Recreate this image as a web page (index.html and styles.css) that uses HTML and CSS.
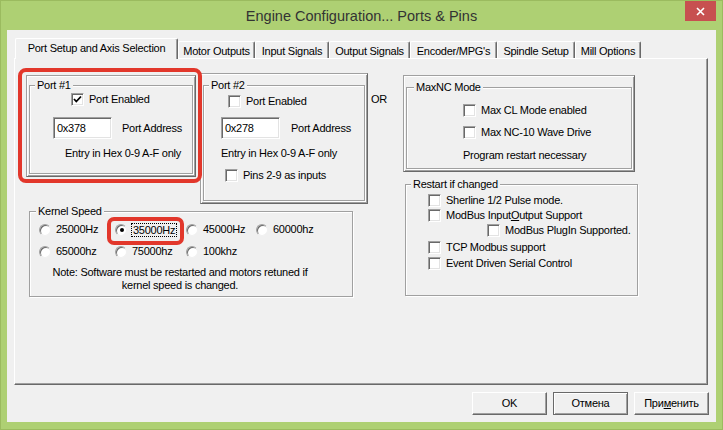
FILE: index.html
```html
<!DOCTYPE html>
<html>
<head>
<meta charset="utf-8">
<title>Engine Configuration... Ports &amp; Pins</title>
<link rel="stylesheet" href="styles.css">
</head>
<body>
<div class="window">
  <div class="titlebar">
    <div class="title">Engine Configuration... Ports &amp; Pins</div>
    <div class="close"><svg width="9" height="9" viewBox="0 0 9 9"><path d="M1 1L8 8M8 1L1 8" stroke="#fff" stroke-width="1.6"/></svg></div>
  </div>
  <div class="client">
    <div class="tabs">
      <div class="tab active">Port Setup and Axis Selection</div>
      <div class="tab t2">Motor Outputs</div>
      <div class="tab t3">Input Signals</div>
      <div class="tab t4">Output Signals</div>
      <div class="tab t5">Encoder/MPG's</div>
      <div class="tab t6">Spindle Setup</div>
      <div class="tab t7">Mill Options</div>
    </div>
    <div class="panel">
      <div class="left">
        <div class="toprow">
          <div class="frame f1">
            <div class="group">
              <div class="legend">Port #1</div>
              <div class="row p1cb"><span class="cb"><svg width="11" height="11" viewBox="0 0 11 11"><path d="M2 5L4.3 7.5L9 2.5" fill="none" stroke="#000" stroke-width="1.8"/></svg></span>Port Enabled</div>
              <div class="inrow p1in"><span class="inp">0x378</span><span>Port Address</span></div>
              <div class="txt p1hex">Entry in Hex 0-9 A-F only</div>
            </div>
          </div>
          <div class="frame f2">
            <div class="group">
              <div class="legend">Port #2</div>
              <div class="row p2cb"><span class="cb"></span>Port Enabled</div>
              <div class="inrow p2in"><span class="inp">0x278</span><span>Port Address</span></div>
              <div class="txt p2hex">Entry in Hex 0-9 A-F only</div>
              <div class="row p2pins"><span class="cb"></span>Pins 2-9 as inputs</div>
            </div>
          </div>
          <div class="or">OR</div>
        </div>
        <div class="group kernel">
          <div class="legend lk">Kernel Speed</div>
          <div class="radios">
            <div class="opt"><span class="rb"></span>25000Hz</div>
            <div class="opt hl"><span class="rb on"></span><span class="focus">35000Hz</span></div>
            <div class="opt"><span class="rb"></span>45000Hz</div>
            <div class="opt"><span class="rb"></span>60000hz</div>
            <div class="opt"><span class="rb"></span>65000hz</div>
            <div class="opt"><span class="rb"></span>75000hz</div>
            <div class="opt"><span class="rb"></span>100khz</div>
          </div>
          <div class="note">Note: Software must be restarted and motors retuned if<br>kernel speed is changed.</div>
        </div>
      </div>
      <div class="right">
        <div class="frame f3">
          <div class="group">
            <div class="legend lm">MaxNC Mode</div>
            <div class="row mx1"><span class="cb"></span>Max CL Mode enabled</div>
            <div class="row mx2"><span class="cb"></span>Max NC-10 Wave Drive</div>
            <div class="txt mxtxt">Program restart necessary</div>
          </div>
        </div>
        <div class="group restart">
          <div class="legend">Restart if changed</div>
          <div class="row r1"><span class="cb"></span>Sherline 1/2 Pulse mode.</div>
          <div class="row r2"><span class="cb"></span>ModBus Input<u>O</u>utput Support</div>
          <div class="row r3"><span class="cb"></span>ModBus PlugIn Supported.</div>
          <div class="row r4"><span class="cb"></span>TCP Modbus support</div>
          <div class="row r5"><span class="cb"></span>Event Driven Serial Control</div>
        </div>
      </div>
    </div>
    <div class="buttons">
      <div class="btn">OK</div>
      <div class="btn def">Отмена</div>
      <div class="btn">При<u>м</u>енить</div>
    </div>
  </div>
</div>
</body>
</html>
```

FILE: styles.css
```css
*, *::before, *::after { box-sizing: border-box; }
html, body { margin: 0; padding: 0; }
body {
  width: 723px;
  height: 430px;
  overflow: hidden;
  font-family: "Liberation Sans", Arial, sans-serif;
  font-size: 11px;
  letter-spacing: -0.25px;
  color: #000;
  background: #aed073;
}
.window {
  width: 723px;
  height: 430px;
  border: 1px solid #9bbb5f;
  background: #aed073;
}
.titlebar {
  height: 29px;
  display: grid;
  grid-template-columns: 1fr auto 1fr;
  align-items: center;
}
.title {
  grid-column: 2;
  font-size: 14.5px;
  letter-spacing: 0;
  color: #333;
  padding-top: 1px;
}
.close {
  grid-column: 3;
  justify-self: end;
  align-self: start;
  width: 31px;
  height: 20px;
  margin-right: 6px;
  background: #c75050;
  display: flex;
  align-items: center;
  justify-content: center;
}
.close svg { display: block; }
.client {
  margin-left: 6px;
  width: 709px;
  height: 392px;
  background: #f0f0f0;
  padding-top: 8px;
}
.tabs {
  display: flex;
  align-items: flex-end;
  height: 20px;
  margin-left: 8px;
}
.tab {
  height: 17px;
  display: flex;
  align-items: center;
  justify-content: center;
  border-top: 1px solid #fff;
  border-left: 1px solid #fff;
  border-right: 1px solid #696969;
  box-shadow: inset -1px 0 0 #a0a0a0;
  border-radius: 2px 2px 0 0;
  white-space: nowrap;
  padding-top: 1px;
}
.tab.active {
  width: 163px;
  height: 21px;
  margin-bottom: -1px;
  position: relative;
  z-index: 1;
  background: #f0f0f0;
  padding: 0 0 3px 0;
}
.t2 { width: 77px; }
.t3 { width: 74px; }
.t4 { width: 81px; }
.t5 { width: 87px; }
.t6 { width: 78px; }
.t7 { width: 66px; }
.panel {
  margin-left: 7px;
  width: 694px;
  height: 327px;
  border: 1px solid;
  border-color: #fff #696969 #696969 #fff;
  box-shadow: inset -1px -1px 0 #a0a0a0;
  display: flex;
  align-items: flex-start;
  padding: 14px 0 0 11px;
}
.left {
  width: 377px;
  display: flex;
  flex-direction: column;
}
.toprow {
  display: flex;
  align-items: flex-start;
}
.frame {
  border: 1px solid;
  border-color: #a0a0a0 #696969 #696969 #a0a0a0;
  box-shadow: inset 1px 1px 0 #fff, inset -1px -1px 0 #a0a0a0;
  padding: 0 2px 2px 2px;
  display: flex;
  flex-direction: column;
}
.f1 {
  width: 170px;
  height: 102px;
  margin-top: 2px;
  padding-top: 9px;
  position: relative;
}
.f1::after {
  content: "";
  position: absolute;
  left: -9px;
  top: -8px;
  right: -7px;
  bottom: -7px;
  border: 4px solid #e2372b;
  border-radius: 8px;
}
.f2 {
  width: 168px;
  height: 131px;
  margin-left: 4px;
  padding-top: 11px;
}
.or {
  margin: 20px 0 0 3px;
  line-height: 13px;
}
.group {
  border: 1px solid #a0a0a0;
  box-shadow: inset 1px 1px 0 #fff, 1px 1px 0 #fff;
  flex: 1;
}
.legend {
  width: fit-content;
  margin: -7px 0 0 5px;
  padding: 0 2px;
  background: #f0f0f0;
  line-height: 13px;
  white-space: nowrap;
}
.lm { margin-left: 7px; }
.lk { margin-left: 6px; }
.row {
  display: flex;
  align-items: center;
  height: 13px;
  line-height: 13px;
  white-space: nowrap;
}
.cb {
  width: 13px;
  height: 13px;
  flex: none;
  background: #fff;
  border: 1px solid;
  border-color: #a0a0a0 #fff #fff #a0a0a0;
  box-shadow: inset 1px 1px 0 #696969, inset -1px -1px 0 #e3e3e3;
  margin-right: 5px;
  display: flex;
  align-items: center;
  justify-content: center;
}
.cb svg { display: block; }
.inrow {
  display: flex;
  align-items: center;
  white-space: nowrap;
}
.inp {
  width: 59px;
  height: 22px;
  flex: none;
  background: #fff;
  border: 1px solid;
  border-color: #a0a0a0 #fff #fff #a0a0a0;
  box-shadow: inset 1px 1px 0 #696969, inset -1px -1px 0 #e3e3e3;
  padding: 0 3px 1px;
  display: flex;
  align-items: center;
}
.txt {
  line-height: 13px;
  white-space: nowrap;
}
.p1cb { margin: 1px 0 0 41px; }
.p1in { margin: 11px 0 0 23px; gap: 10px; }
.p1hex { margin: 8px 0 0 35px; }
.p2cb { margin: 3px 0 0 24px; }
.p2in { margin: 9px 0 0 17px; gap: 11px; }
.p2hex { margin: 8px 0 0 17px; }
.p2pins { margin: 9px 0 0 21px; }
.kernel {
  flex: none;
  width: 324px;
  height: 86px;
  margin: 7px 0 0 3px;
}
.radios {
  display: grid;
  grid-template-columns: 76px 71px 70px auto;
  row-gap: 9px;
  margin: 5px 0 0 9px;
}
.opt {
  display: flex;
  align-items: center;
  height: 13px;
  line-height: 13px;
  white-space: nowrap;
}
.rb {
  width: 12px;
  height: 12px;
  flex: none;
  border-radius: 50%;
  background: #fff;
  border: 1px solid;
  border-color: #a0a0a0 #f0f0f0 #f0f0f0 #a0a0a0;
  box-shadow: inset 1px 1px 0 #696969;
  margin-right: 5px;
  display: flex;
  align-items: center;
  justify-content: center;
}
.rb.on::before {
  content: "";
  width: 4px;
  height: 4px;
  border-radius: 50%;
  background: #000;
  margin: 1px 0 0 1px;
}
.hl { position: relative; }
.hl::after {
  content: "";
  position: absolute;
  left: -8px;
  top: -6px;
  width: 77px;
  height: 28px;
  border: 4px solid #e2372b;
  border-radius: 7px;
}
.focus {
  outline: 1px dotted #000;
  padding: 0 1px;
  line-height: 12px;
}
.note {
  width: 300px;
  margin-top: 8px;
  text-align: center;
  line-height: 13px;
  white-space: nowrap;
}
.right {
  display: flex;
  flex-direction: column;
}
.f3 {
  width: 232px;
  height: 97px;
  margin-top: 2px;
  padding-top: 11px;
}
.mx1 { margin: 10px 0 0 56px; }
.mx2 { margin: 9px 0 0 56px; }
.mxtxt { margin: 10px 0 0 56px; }
.restart {
  flex: none;
  width: 233px;
  height: 112px;
  margin: 12px 0 0 2px;
}
.r1 { margin: 3px 0 0 22px; }
.r2 { margin: 2px 0 0 22px; }
.r3 { margin: 2px 0 0 81px; }
.r4 { margin: 4px 0 0 22px; }
.r5 { margin: 3px 0 0 22px; }
.buttons {
  display: flex;
  justify-content: flex-end;
  gap: 6px;
  margin: 7px 7px 0 0;
}
.btn {
  width: 75px;
  height: 23px;
  display: flex;
  align-items: center;
  justify-content: center;
  background: #f0f0f0;
  border: 1px solid;
  border-color: #fff #696969 #696969 #fff;
  box-shadow: inset -1px -1px 0 #a0a0a0;
  padding-bottom: 1px;
}
.btn.def {
  border-color: #696969;
  box-shadow: inset 1px 1px 0 #fff, inset -1px -1px 0 #a0a0a0;
}
```
